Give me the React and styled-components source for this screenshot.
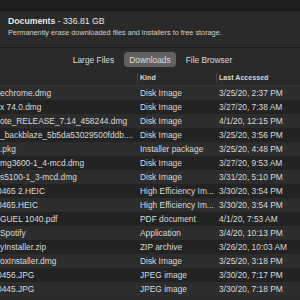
import styled, { createGlobalStyle } from "styled-components";

const GlobalStyle = createGlobalStyle`
  body {
    margin: 0;
    background-color: #2a2a2a;
    font-family: "Liberation Sans", Arial, sans-serif;
  }
`;

const Window = styled.div`
  width: 300px;
  height: 300px;
  overflow: hidden;
  background-color: #2a2a2a;
  color: #dadada;
`;

const TopBar = styled.div`
  height: 10px;
  background-color: #1e1e1e;
  border-bottom: 1px solid #141414;
`;

const Header = styled.div`
  padding: 5px 8px 0;
  height: 31px;
  border-bottom: 1px solid #1a1a1a;
`;

const Title = styled.div`
  font-size: 8.7px;
  line-height: 11px;
  color: #e6e6e6;

  b {
    font-weight: 700;
  }
`;

const Subtitle = styled.div`
  margin-top: 1px;
  font-size: 7.3px;
  line-height: 9px;
  color: #d0d0d0;
`;

const Tabs = styled.div`
  display: flex;
  justify-content: center;
  gap: 5px;
  padding: 4px 0 3px 5px;
`;

const Tab = styled.button`
  height: 15px;
  padding: 0 5px;
  border: none;
  border-radius: 4px;
  font-family: inherit;
  font-size: 8.4px;
  color: #dcdcdc;
  background-color: ${(p) => (p.$active ? "#626262" : "transparent")};
`;

const Grid = styled.div`
  display: grid;
  grid-template-columns: 137px 79px 78px 1fr;
  align-items: center;
`;

const HeadRow = styled(Grid)`
  height: 15px;
  border-bottom: 1px solid #393939;
`;

const HeadCell = styled.div`
  font-size: 7.1px;
  font-weight: 700;
  color: #d6d6d6;
  line-height: 10px;
  padding-left: 2px;
  border-left: ${(p) => (p.$first ? "none" : "1px solid #474747")};
  white-space: nowrap;
`;

const Row = styled(Grid)`
  height: 14px;
  background-color: ${(p) => (p.$odd ? "#2d2d2d" : "#232323")};
  font-size: 8.4px;
`;

const NameCell = styled.div`
  overflow: hidden;
  white-space: nowrap;
  text-overflow: clip;

  span {
    display: inline-block;
    margin-left: ${(p) => p.$shift || 0}px;
  }
`;

const Cell = styled.div`
  padding-left: 3px;
  white-space: nowrap;
  overflow: hidden;
`;

const files = [
  ["echrome.dmg", "Disk Image", "3/25/20, 2:37 PM"],
  ["x 74.0.dmg", "Disk Image", "3/27/20, 7:38 AM"],
  ["ote_RELEASE_7.14_458244.dmg", "Disk Image", "4/1/20, 12:15 PM"],
  ["_backblaze_5b5da53029500fddb....", "Disk Image", "3/25/20, 3:56 PM"],
  [".pkg", "Installer package", "3/25/20, 4:48 PM"],
  ["mg3600-1_4-mcd.dmg", "Disk Image", "3/27/20, 9:53 AM"],
  ["s5100-1_3-mcd.dmg", "Disk Image", "3/31/20, 5:10 PM"],
  ["0465 2.HEIC", "High Efficiency Im...", "3/30/20, 3:54 PM", -3],
  ["0465.HEIC", "High Efficiency Im...", "3/30/20, 3:54 PM", -3],
  ["GUEL 1040.pdf", "PDF document", "4/1/20, 7:53 AM"],
  [" Spotify", "Application", "3/4/20, 10:13 PM"],
  ["yInstaller.zip", "ZIP archive", "3/26/20, 10:03 AM"],
  ["oxInstaller.dmg", "Disk Image", "3/25/20, 3:18 PM"],
  ["0456.JPG", "JPEG image", "3/30/20, 7:17 PM", -3],
  ["0445.JPG", "JPEG image", "3/30/20, 7:18 PM", -3],
];

export default function App() {
  return (
    <>
      <GlobalStyle />
      <Window>
        <TopBar />
        <Header>
          <Title>
            <b>Documents</b> - 336.81 GB
          </Title>
          <Subtitle>
            Permanently erase downloaded files and installers to free storage.
          </Subtitle>
        </Header>
        <Tabs>
          <Tab>Large Files</Tab>
          <Tab $active>Downloads</Tab>
          <Tab>File Browser</Tab>
        </Tabs>
        <HeadRow>
          <HeadCell $first />
          <HeadCell>Kind</HeadCell>
          <HeadCell>Last Accessed</HeadCell>
          <HeadCell />
        </HeadRow>
        {files.map(([name, kind, date, shift], i) => (
          <Row key={i} $odd={i % 2 === 0}>
            <NameCell $shift={shift}>
              <span>{name}</span>
            </NameCell>
            <Cell>{kind}</Cell>
            <Cell>{date}</Cell>
            <Cell />
          </Row>
        ))}
      </Window>
    </>
  );
}
